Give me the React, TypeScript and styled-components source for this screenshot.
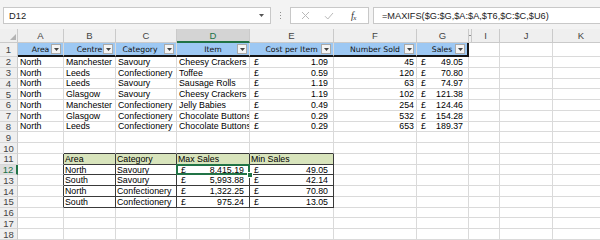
import React from 'react'
import styled, { createGlobalStyle } from 'styled-components'

const GlobalStyle = createGlobalStyle`
  html, body {
    margin: 0;
    padding: 0;
    background: #ffffff;
    overflow: hidden;
  }
  body {
    width: 600px;
    height: 240px;
    font-family: 'Liberation Sans', Arial, sans-serif;
  }
`

const GRID = '#dadada'
const HEAD_LINE = '#cacaca'
const DARK = '#3a3a3a'
const BLACK = '#151515'
const GREEN = '#217346'

type Edge = { color: string, width: number }

const COLUMNS = [
  { label: 'A', width: 46 },
  { label: 'B', width: 52 },
  { label: 'C', width: 61 },
  { label: 'D', width: 73 },
  { label: 'E', width: 84 },
  { label: 'F', width: 83 },
  { label: 'G', width: 52 },
  { label: 'H', width: 3 },
  { label: 'I', width: 28 },
  { label: 'J', width: 53 },
  { label: 'K', width: 57 },
]
const ROW_COUNT = 19

const HEADERS = ['Area', 'Centre', 'Category', 'Item', 'Cost per Item', 'Number Sold', 'Sales']
const SALES = [
  ['North', 'Manchester', 'Savoury', 'Cheesy Crackers', '1.09', '45', '49.05'],
  ['North', 'Leeds', 'Confectionery', 'Toffee', '0.59', '120', '70.80'],
  ['North', 'Leeds', 'Savoury', 'Sausage Rolls', '1.19', '63', '74.97'],
  ['North', 'Glasgow', 'Savoury', 'Cheesy Crackers', '1.19', '102', '121.38'],
  ['North', 'Manchester', 'Confectionery', 'Jelly Babies', '0.49', '254', '124.46'],
  ['North', 'Glasgow', 'Confectionery', 'Chocolate Buttons', '0.29', '532', '154.28'],
  ['North', 'Leeds', 'Confectionery', 'Chocolate Buttons', '0.29', '653', '189.37'],
]
const SUMMARY_HEADERS = ['Area', 'Category', 'Max Sales', 'Min Sales']
const SUMMARY = [
  ['North', 'Savoury', '8,415.19', '49.05'],
  ['South', 'Savoury', '5,993.88', '42.14'],
  ['North', 'Confectionery', '1,322.25', '70.80'],
  ['South', 'Confectionery', '975.24', '13.05'],
]

// ---- formula bar ----
const FormulaBar = styled.div`
  display: flex;
  align-items: flex-start;
  height: 29px;
  box-sizing: border-box;
  padding: 7px 0 0 3px;
  background: #f3f3f3;
`
const Box = styled.div`
  box-sizing: border-box;
  height: 17px;
  background: #ffffff;
  border: 1px solid #c8c8c8;
  display: flex;
  align-items: center;
`
const NameBox = styled(Box)`
  width: 268px;
  padding: 0 6px 0 5px;
  justify-content: space-between;
  font-size: 9.3px;
  color: #222;
`
const Grip = styled.div`
  width: 19px;
  height: 17px;
  display: flex;
  flex-direction: column;
  align-items: center;
  justify-content: center;
  gap: 2px;
`
const GripDot = styled.i`
  display: block;
  width: 1px;
  height: 1px;
  background: #8f8f8f;
`
const ButtonBox = styled(Box)`
  width: 79px;
  margin-right: 4px;
`
const Tool = styled.span<{ $ml: number }>`
  display: flex;
  align-items: center;
  margin-left: ${p => p.$ml}px;
`
const Fx = styled.span`
  font-family: 'Liberation Serif', 'Times New Roman', serif;
  font-style: italic;
  font-size: 10px;
  color: #333;
  letter-spacing: -0.5px;
  sub {
    font-size: 7px;
    vertical-align: -1px;
  }
`
const FormulaInput = styled(Box)`
  flex: 1;
  padding-left: 8px;
  border-right: none;
  font-size: 9.2px;
  color: #222;
`

// ---- sheet ----
const Sheet = styled.div`
  display: grid;
  grid-template-columns: 18px ${COLUMNS.map(c => `${c.width}px`).join(' ')};
  grid-template-rows: 14px 14px repeat(${ROW_COUNT - 1}, 10.77px);
`
const Corner = styled.div`
  box-sizing: border-box;
  display: flex;
  align-items: flex-end;
  justify-content: flex-end;
  padding: 0 1px 2px 0;
  background: #efefef;
  border-right: 1px solid ${HEAD_LINE};
  border-bottom: 1px solid ${HEAD_LINE};
`
const ColHead = styled.div<{ $active?: boolean }>`
  box-sizing: border-box;
  display: flex;
  align-items: center;
  justify-content: center;
  overflow: hidden;
  background: ${p => (p.$active ? '#d4d4d4' : '#efefef')};
  color: ${p => (p.$active ? GREEN : '#444')};
  border-right: 1px solid ${HEAD_LINE};
  border-bottom: ${p => (p.$active ? `2px solid ${GREEN}` : `1px solid ${HEAD_LINE}`)};
  font-size: 9.5px;
`
const RowHead = styled.div<{ $active?: boolean }>`
  box-sizing: border-box;
  display: flex;
  align-items: center;
  justify-content: center;
  background: ${p => (p.$active ? '#dedede' : '#efefef')};
  color: ${p => (p.$active ? GREEN : '#444')};
  border-right: ${p => (p.$active ? `2px solid ${GREEN}` : `1px solid ${HEAD_LINE}`)};
  border-bottom: 1px solid #d6d6d6;
  font-size: 9.5px;
`
const Cell = styled.div<{ $right: Edge, $bottom: Edge, $fill?: string, $justify?: string, $pad?: string }>`
  position: relative;
  box-sizing: border-box;
  display: flex;
  align-items: center;
  justify-content: ${p => p.$justify ?? 'flex-start'};
  padding: ${p => p.$pad ?? '0 2px'};
  overflow: hidden;
  white-space: nowrap;
  background: ${p => p.$fill ?? '#ffffff'};
  border-right: ${p => `${p.$right.width}px solid ${p.$right.color}`};
  border-bottom: ${p => `${p.$bottom.width}px solid ${p.$bottom.color}`};
  font-size: 8.8px;
  color: #000;
`
const TableHead = styled(Cell)`
  font-family: 'DejaVu Sans', Verdana, sans-serif;
  font-size: 7.7px;
  color: #111;
`
const ActiveCell = styled(Cell)`
  overflow: visible;
  z-index: 2;
  &::after {
    content: '';
    position: absolute;
    left: -1px;
    top: -1px;
    right: -1px;
    bottom: -1px;
    border: 2px solid ${GREEN};
    pointer-events: none;
  }
`
const FillHandle = styled.span`
  position: absolute;
  right: -4px;
  bottom: -4px;
  width: 4px;
  height: 4px;
  background: ${GREEN};
  border: 1px solid #ffffff;
  z-index: 3;
`
const FilterButton = styled.span`
  position: absolute;
  top: 1px;
  right: 2px;
  width: 10px;
  height: 10px;
  box-sizing: border-box;
  display: flex;
  align-items: center;
  justify-content: center;
  background: #f4f4f4;
  border: 1px solid #a9a9a9;
`

const gridEdge: Edge = { color: GRID, width: 1 }
const darkEdge: Edge = { color: DARK, width: 1 }
const blackEdge: Edge = { color: BLACK, width: 2 }

function edgesFor (row: number, col: number) {
  let right = gridEdge
  let bottom = gridEdge
  const inSummary = row >= 11 && row <= 15 && col >= 2 && col <= 5
  if (row === 1 && col <= 7) bottom = blackEdge
  if (row === 1 && col === 7) right = blackEdge
  if (inSummary) {
    right = darkEdge
    bottom = darkEdge
  }
  if (row === 10 && col >= 2 && col <= 5) bottom = darkEdge
  if (row >= 11 && row <= 15 && col === 1) right = darkEdge
  return { $right: right, $bottom: bottom }
}

const Caret = ({ color = '#555' }: { color?: string }) => (
  <svg width='5' height='3' viewBox='0 0 5 3'>
    <path d='M0 0h5L2.5 3z' fill={color} />
  </svg>
)

function renderCell (row: number, col: number) {
  const key = `${row}-${col}`
  const edges = edgesFor(row, col)

  if (row === 1 && col <= 7) {
    return (
      <TableHead key={key} {...edges} $fill='#9dc8f3' $justify='center' $pad={col === 3 ? '0 12px 0 0' : '0 1px'}>
        {HEADERS[col - 1]}
        <FilterButton><Caret color='#444' /></FilterButton>
      </TableHead>
    )
  }

  if (row >= 2 && row <= 8 && col <= 7) {
    const value = SALES[row - 2][col - 1]
    if (col === 5 || col === 7) {
      return (
        <Cell key={key} {...edges} $justify='space-between' $pad='0 5px 0 4px'>
          <span>£</span><span>{value}</span>
        </Cell>
      )
    }
    if (col === 6) {
      return <Cell key={key} {...edges} $justify='flex-end' $pad='0 2px'>{value}</Cell>
    }
    return <Cell key={key} {...edges}>{value}</Cell>
  }

  if (row === 11 && col >= 2 && col <= 5) {
    return <Cell key={key} {...edges} $fill='#d8e4bc' $pad='0 1px'>{SUMMARY_HEADERS[col - 2]}</Cell>
  }

  if (row >= 12 && row <= 15 && col >= 2 && col <= 5) {
    const value = SUMMARY[row - 12][col - 2]
    if (col >= 4) {
      const Comp = row === 12 && col === 4 ? ActiveCell : Cell
      return (
        <Comp key={key} {...edges} $justify='space-between' $pad='0 5px 0 4px'>
          <span>£</span><span>{value}</span>
          {row === 12 && col === 4 && <FillHandle />}
        </Comp>
      )
    }
    return <Cell key={key} {...edges} $pad='0 1px'>{value}</Cell>
  }

  return <Cell key={key} {...edges} />
}

export default function App () {
  const rows = Array.from({ length: ROW_COUNT }, (_, i) => i + 1)
  return (
    <>
      <GlobalStyle />
      <FormulaBar>
        <NameBox>
          D12
          <Caret />
        </NameBox>
        <Grip><GripDot /><GripDot /><GripDot /></Grip>
        <ButtonBox>
          <Tool $ml={10}>
            <svg width='9' height='9' viewBox='0 0 9 9'>
              <path d='M1 1l7 7M8 1l-7 7' stroke='#b9b9b9' strokeWidth='1' />
            </svg>
          </Tool>
          <Tool $ml={14}>
            <svg width='10' height='8' viewBox='0 0 10 8'>
              <path d='M1 4.2l2.8 2.8L9 1' stroke='#b9b9b9' strokeWidth='1' fill='none' />
            </svg>
          </Tool>
          <Tool $ml={17}>
            <Fx>f<sub>x</sub></Fx>
          </Tool>
        </ButtonBox>
        <FormulaInput>=MAXIFS($G:$G,$A:$A,$T6,$C:$C,$U6)</FormulaInput>
      </FormulaBar>
      <Sheet>
        <Corner>
          <svg width='6' height='6' viewBox='0 0 6 6'>
            <path d='M6 0v6H0z' fill='#b3b3b3' />
          </svg>
        </Corner>
        {COLUMNS.map(c => (
          <ColHead key={c.label} $active={c.label === 'D'}>{c.label}</ColHead>
        ))}
        {rows.map(r => (
          <React.Fragment key={r}>
            <RowHead $active={r === 12}>{r}</RowHead>
            {COLUMNS.map((_, i) => renderCell(r, i + 1))}
          </React.Fragment>
        ))}
      </Sheet>
    </>
  )
}
